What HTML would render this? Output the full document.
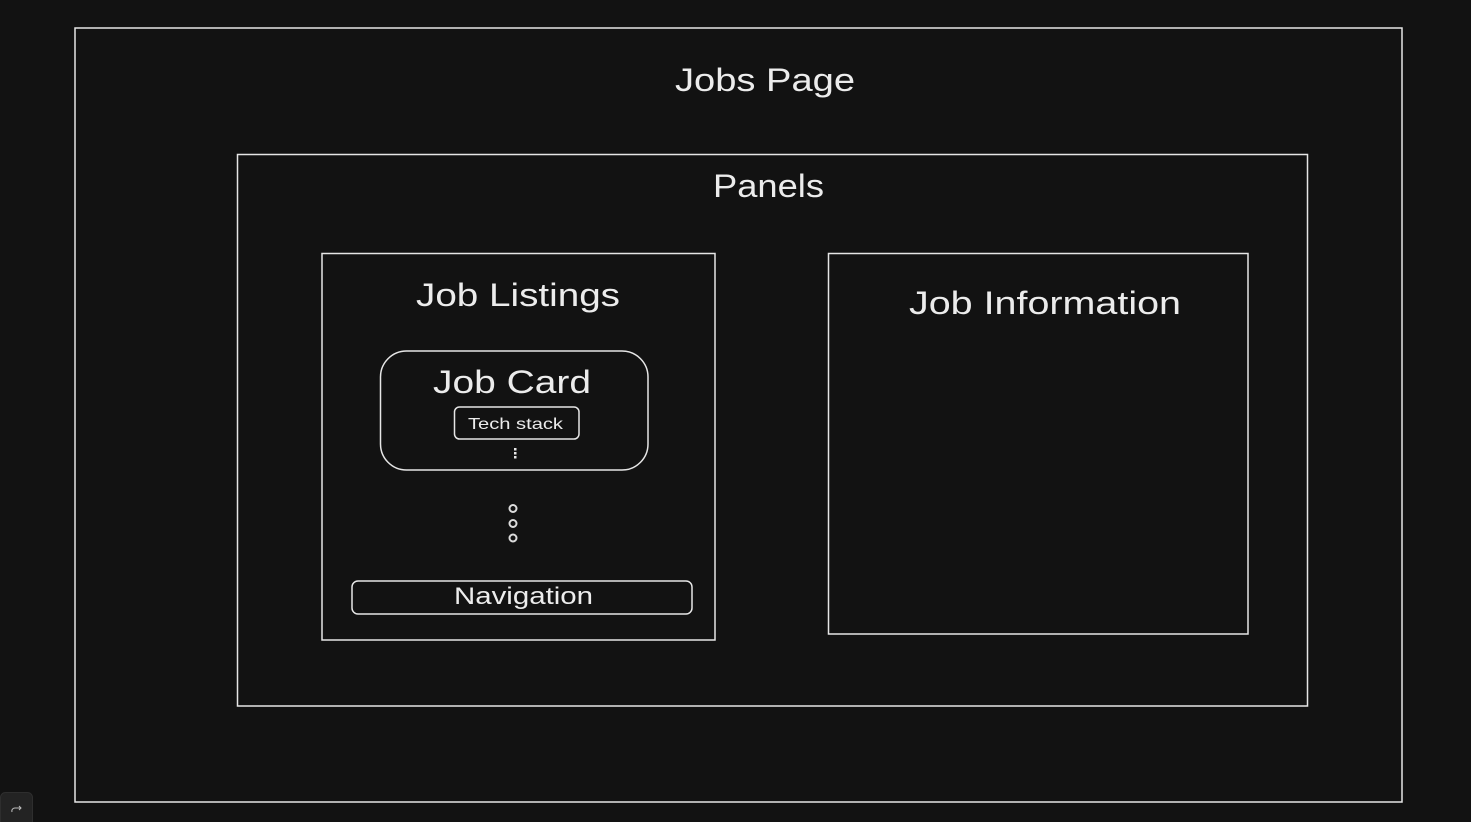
<!DOCTYPE html>
<html><head><style>
html,body{margin:0;padding:0;background:#121212;width:1471px;height:822px;overflow:hidden}
</style></head><body>
<svg width="1471" height="822" xmlns="http://www.w3.org/2000/svg" style="position:absolute;left:0;top:0">
<rect width="1471" height="822" fill="#121212"/>
<g fill="none" stroke="#e6e6e6" stroke-width="1.5">
<rect x="75" y="28" width="1327" height="774"/>
<rect x="237.5" y="154.5" width="1070" height="551.5"/>
<rect x="322" y="253.5" width="393" height="386.5"/>
<rect x="828.5" y="253.5" width="419.5" height="380.5"/>
<rect x="380.5" y="351" width="267.5" height="119" rx="26"/>
<rect x="454.5" y="407" width="124.5" height="32" rx="5"/>
<rect x="352" y="581" width="340" height="33" rx="6"/>
</g>
<g fill="none" stroke="#dcdcdc" stroke-width="2">
<circle cx="513" cy="508.5" r="3.5"/>
<circle cx="513" cy="523.5" r="3.5"/>
<circle cx="513" cy="538" r="3.5"/>
</g>
<g fill="#e6e6e6">
<rect x="514" y="448" width="2.5" height="2.5"/>
<rect x="514" y="452" width="2.5" height="2.5"/>
<rect x="514" y="456" width="2.5" height="2.5"/>
</g>
<g fill="#ececec" font-family="Liberation Sans, sans-serif">
<text x="675" y="91" font-size="32" textLength="180" lengthAdjust="spacingAndGlyphs">Jobs Page</text>
<text x="713" y="197" font-size="32" textLength="111" lengthAdjust="spacingAndGlyphs">Panels</text>
<text x="416" y="306" font-size="32" textLength="204" lengthAdjust="spacingAndGlyphs">Job Listings</text>
<text x="909" y="314" font-size="32" textLength="272" lengthAdjust="spacingAndGlyphs">Job Information</text>
<text x="433" y="393" font-size="32" textLength="158" lengthAdjust="spacingAndGlyphs">Job Card</text>
<text x="468" y="429" font-size="16" textLength="95" lengthAdjust="spacingAndGlyphs">Tech stack</text>
<text x="454" y="604" font-size="24" textLength="139" lengthAdjust="spacingAndGlyphs">Navigation</text>
</g>
<rect x="0.5" y="792.5" width="32" height="34" rx="5" fill="#232323" stroke="#2e2e2e"/>
<path d="M12 812 a3 3 0 0 1 3-4 h6 m-2-2 l2 2 l-2 2" fill="none" stroke="#bbb" stroke-width="1"/>
</svg>
</body></html>
